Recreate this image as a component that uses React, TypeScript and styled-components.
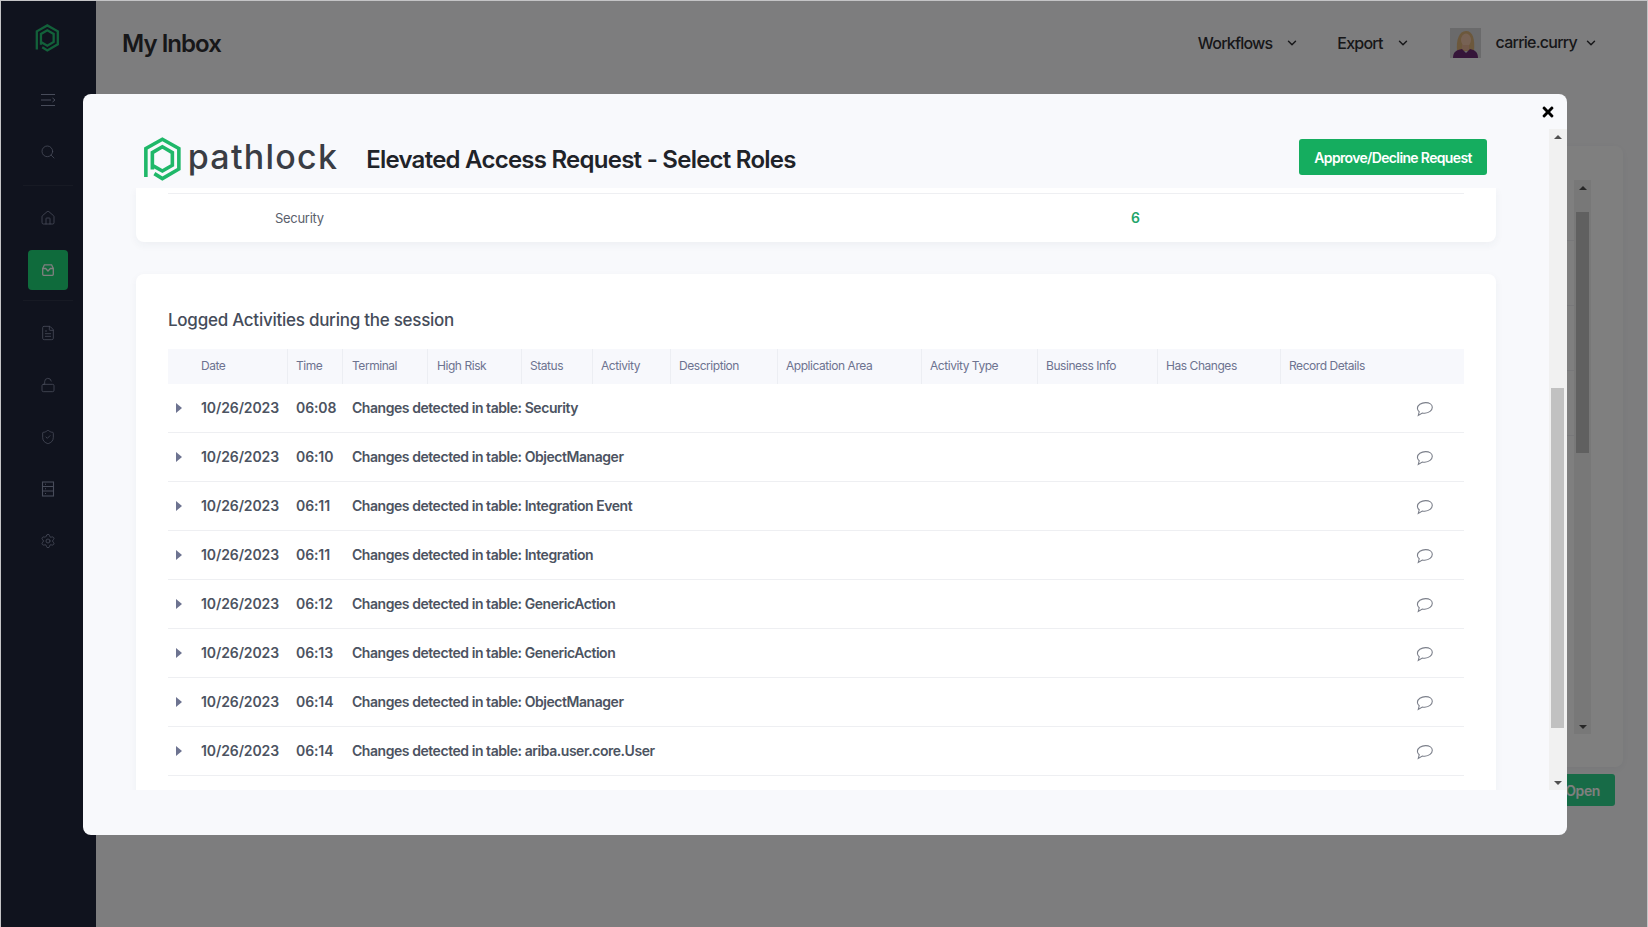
import React from 'react';
import styled, { createGlobalStyle } from 'styled-components';
import { ChevronDown, FileText, Home, LockOpen, Search, Settings, ShieldCheck } from 'lucide-react';
import { FaTimes } from 'react-icons/fa';

const GlobalStyle = createGlobalStyle`
    html, body {
        margin: 0;
        padding: 0;
        background: #c4c4c6;
    }
    * {
        box-sizing: border-box;
    }
    body {
        font-family: Inter, "Liberation Sans", sans-serif;
    }
`;

const Shell = styled.div`
    position: relative;
    display: flex;
    width: 1648px;
    height: 926px;
    margin-top: 1px;
    padding: 0 1px;
    overflow: hidden;
    background: #c4c4c6;
`;

const Sidebar = styled.aside`
    display: flex;
    flex-direction: column;
    align-items: center;
    flex: 0 0 95px;
    padding: 23px 2px 0 0;
    background: #20263c;
    color: #9098b4;
`;

const SideLogo = styled.div`
    height: 28px;
    margin-bottom: 28px;
`;

const NavItem = styled.div<{ $active?: boolean }>`
    display: flex;
    align-items: center;
    justify-content: center;
    width: 40px;
    height: 40px;
    margin-bottom: ${({ $active }) => ($active ? '9px' : '12px')};
    border-radius: 4px;
    background: ${({ $active }) => ($active ? '#1fd678' : 'transparent')};
    color: ${({ $active }) => ($active ? '#fff' : 'inherit')};
`;

const NavDivider = styled.div`
    width: 50px;
    height: 1px;
    margin: 1px 0 12px;
    background: #2e3448;
`;

const Main = styled.main`
    display: flex;
    flex-direction: column;
    flex: 1;
    min-width: 0;
    background: #fbfbfd;
`;

const TopBar = styled.header`
    display: flex;
    align-items: center;
    height: 84px;
    padding: 0 49px 0 26px;
    color: #2e2e32;
`;

const PageTitle = styled.h1`
    flex: 1;
    margin: 0;
    font-size: 24px;
    font-weight: 600;
    letter-spacing: -0.95px;
`;

const TopMenu = styled.div`
    display: flex;
    align-items: center;
    gap: 13px;
    margin-right: 38px;
    font-size: 16px;
    font-weight: 500;
    letter-spacing: -0.8px;
`;

const UserMenu = styled.div`
    display: flex;
    align-items: center;
    gap: 7px;
    margin-left: 2px;
    font-size: 16px;
    font-weight: 500;
    letter-spacing: -0.75px;
`;

const UserName = styled.span`
    margin-left: 8px;
    margin-top: -2px;
`;

const Content = styled.div`
    display: flex;
    flex-direction: column;
    flex: 1;
    padding: 61px 24px 0;
`;

const BackCard = styled.section`
    display: flex;
    justify-content: flex-end;
    gap: 32px;
    height: 621px;
    padding: 34px 32px 33px;
    border-radius: 8px;
    background: #fff;
    box-shadow: 0 2px 8px rgba(40, 50, 80, 0.06);
`;

const BackRows = styled.div`
    flex: 1;
`;

const BackRow = styled.div<{ $first?: boolean }>`
    height: ${({ $first }) => ($first ? '61px' : '65px')};
    border-bottom: 1px solid #f1f1f4;
    margin-right: -32px;
`;

const BackTrack = styled.div`
    position: relative;
    flex: 0 0 17px;
    background: #f1f1f1;
`;

const BackThumb = styled.div`
    position: absolute;
    top: 32px;
    left: 2px;
    width: 13px;
    height: 241px;
    background: #c1c1c1;
`;

const BackFooter = styled.div`
    display: flex;
    justify-content: flex-end;
    padding: 7px 8px 0 0;
`;

const OpenButton = styled.button`
    width: 100px;
    height: 32px;
    padding: 0 15px 0 0;
    border: 0;
    border-radius: 3px;
    background: #2fd68e;
    color: #fff;
    font: 600 14px Inter, sans-serif;
    letter-spacing: -0.4px;
    text-align: right;
`;

const Arrow = styled.span<{ $down?: boolean }>`
    position: absolute;
    left: 50%;
    ${({ $down }) => ($down ? 'bottom: 5px;' : 'top: 6px;')}
    margin-left: -4px;
    border-left: 4px solid transparent;
    border-right: 4px solid transparent;
    ${({ $down }) => ($down ? 'border-top' : 'border-bottom')}: 4px solid #505050;
`;

const Backdrop = styled.div`
    position: absolute;
    inset: 0 1px;
    display: flex;
    align-items: flex-start;
    padding: 93px 0 0 82px;
    background: rgba(0, 0, 0, 0.5);
`;

const Modal = styled.div`
    position: relative;
    display: flex;
    width: 1484px;
    height: 741px;
    border-radius: 8px;
    background: #f8f9fc;
`;

const CloseButton = styled.button`
    position: absolute;
    top: 10px;
    right: 11px;
    display: flex;
    padding: 0;
    border: 0;
    background: none;
    color: #000;
`;

const ModalMain = styled.div`
    display: flex;
    flex-direction: column;
    flex: 1;
    min-width: 0;
    height: 696px;
`;

const ModalHeader = styled.div`
    display: flex;
    align-items: center;
    flex: 0 0 94px;
    padding: 43px 62px 7px 60px;
`;

const Brand = styled.div`
    display: flex;
    align-items: center;
    gap: 6px;
`;

const BrandName = styled.span`
    font-size: 34px;
    font-weight: 500;
    letter-spacing: 1.25px;
    line-height: 44px;
    color: #3a3d44;
    margin-top: -4px;
`;

const ModalTitle = styled.h2`
    flex: 1;
    margin: 1px 0 0 28px;
    font-size: 24px;
    font-weight: 600;
    letter-spacing: -0.75px;
    color: #1f2329;
`;

const ApproveButton = styled.button`
    width: 188px;
    height: 36px;
    margin-top: -4px;
    padding: 0;
    border: 0;
    border-radius: 3px;
    background: #15ad5f;
    color: #fff;
    font: 600 14px Inter, sans-serif;
    letter-spacing: -0.65px;
`;

const ScrollArea = styled.div`
    flex: 1;
    min-height: 0;
    padding: 0 53px;
    overflow: hidden;
`;

const SummaryCard = styled.section`
    height: 54px;
    padding: 5px 32px 0;
    border-radius: 0 0 8px 8px;
    background: #fff;
    box-shadow: 0 3px 8px rgba(40, 50, 80, 0.05);
`;

const SummaryRow = styled.div`
    display: flex;
    align-items: center;
    height: 48px;
    padding-left: 107px;
    border-top: 1px solid #eeeff2;
    font-size: 13px;
    letter-spacing: -0.3px;
    color: #5a606c;
`;

const SummaryLabel = styled.span`
    width: 856px;
`;

const SummaryValue = styled.span`
    font-size: 14px;
    font-weight: 600;
    color: #22a56a;
`;

const ActivityCard = styled.section`
    margin-top: 32px;
    padding: 32px 32px 60px;
    border-radius: 8px;
    background: #fff;
    box-shadow: 0 3px 8px rgba(40, 50, 80, 0.05);
`;

const ActivityTitle = styled.h3`
    margin: 0 0 15px;
    font-size: 17px;
    line-height: 28px;
    font-weight: 500;
    letter-spacing: -0.26px;
    color: #454c5a;
`;

const TableHead = styled.div`
    display: flex;
    height: 35px;
    background: #f7f8fc;
`;

const HeadCell = styled.div<{ $width?: number; $inset?: number }>`
    flex: ${({ $width }) => ($width ? `0 0 ${$width}px` : '1')};
    padding-left: ${({ $inset }) => $inset ?? 8}px;
    border-right: ${({ $width }) => ($width ? '1px solid #eceef3' : '0')};
    font-size: 12px;
    letter-spacing: -0.45px;
    line-height: 34px;
    color: #6d7390;
    white-space: nowrap;
`;

const Row = styled.div`
    display: flex;
    align-items: center;
    height: 49px;
    padding-bottom: 1px;
    border-bottom: 1px solid #eeeff2;
    font-size: 14px;
    font-weight: 600;
    letter-spacing: -0.1px;
    color: #4c5361;
`;

const Caret = styled.div`
    flex: 0 0 33px;
    padding-left: 8px;
    &::before {
        content: '';
        display: block;
        width: 0;
        height: 0;
        border-top: 5px solid transparent;
        border-bottom: 5px solid transparent;
        border-left: 6px solid #6d7390;
    }
`;

const DateCell = styled.div`
    flex: 0 0 95px;
`;

const TimeCell = styled.div`
    flex: 0 0 56px;
`;

const DetailCell = styled.div`
    flex: 1;
    letter-spacing: -0.45px;
`;

const CommentSlot = styled.div`
    display: flex;
    flex: 0 0 48px;
    padding-top: 3px;
    color: #7b7f8a;
`;

const ScrollTrack = styled.div`
    position: relative;
    flex: 0 0 18px;
    margin: 35px 0 45px;
    background: #f1f1f1;
`;

const ScrollThumb = styled.div`
    position: absolute;
    top: 259px;
    left: 2px;
    width: 13px;
    height: 340px;
    background: #c1c1c1;
`;

const PathlockMark = ({ size, color }: { size: number; color: string }) => (
    <svg width={size * 0.88} height={size} viewBox="0 0 38 44" fill="none" stroke={color} strokeWidth="3.6">
        <path d="M2.5 40V11.5L19 2.2 35.5 11.5V32L19 41.6 11 36.6" />
        <path d="M9 32.5V15.6L19 9.8 29 15.6V28.2L19 34 9 28.4" />
    </svg>
);

const MenuIcon = () => (
    <svg width="18" height="16" viewBox="0 0 18 16" fill="none" stroke="currentColor" strokeWidth="1">
        <path d="M2 2.5h14M2 8h10M2 13.5h14M13.5 6l2.5 2-2.5 2" />
    </svg>
);

const TrayIcon = () => (
    <svg width="16" height="16" viewBox="0 0 16 16" fill="none" stroke="currentColor" strokeWidth="1.3">
        <path d="M2.7 6.5 4.4 2.8h7.2l1.7 3.7v5.8a1 1 0 0 1-1 1H3.7a1 1 0 0 1-1-1z" />
        <path d="M2.7 6.5h2.9L8 9l2.4-2.5h2.9" />
    </svg>
);

const ListIcon = () => (
    <svg width="16" height="18" viewBox="0 0 16 18" fill="none" stroke="currentColor" strokeWidth="1.1">
        <rect x="2.5" y="2" width="11" height="14" />
        <path d="M2.5 6.5h11M2.5 11h11M5 4.2h1M5 8.7h1M5 13.5h1" />
    </svg>
);

const CommentIcon = () => (
    <svg width="18" height="17" viewBox="0 0 18 17" fill="none" stroke="currentColor" strokeWidth="1.1">
        <path d="M9.6 1.6C5.2 1.6 1.4 4 1.4 7.3c0 1.4.7 2.6 1.8 3.5l-.9 3.6 4-2.4c.8.2 1.6.2 2.4.2 4.2-.2 7.6-2.6 7.6-5.9 0-2.9-2.9-4.7-6.7-4.7z" />
    </svg>
);

const Avatar = () => (
    <svg width="31" height="30" viewBox="0 0 31 30">
        <rect width="31" height="30" fill="#d4d4d6" />
        <path d="M7 23C6 12 9 3 16 3s9 8 8 20z" fill="#d8b078" />
        <ellipse cx="16" cy="12" rx="5" ry="6.5" fill="#efc4a8" />
        <path d="M12 17h7v5h-7z" fill="#e4b294" />
        <path d="M3 30c0-6 3-8 9-9l4 4 4-4c5 1 8 3 8 9z" fill="#6b2a72" />
    </svg>
);

const sideIcons = { size: 16, strokeWidth: 1.2 };

const columns: { label: string; width?: number; inset?: number }[] = [
    { label: 'Date', width: 120, inset: 33 },
    { label: 'Time', width: 55 },
    { label: 'Terminal', width: 85, inset: 9 },
    { label: 'High Risk', width: 94, inset: 9 },
    { label: 'Status', width: 71 },
    { label: 'Activity', width: 78 },
    { label: 'Description', width: 107 },
    { label: 'Application Area', width: 144 },
    { label: 'Activity Type', width: 116 },
    { label: 'Business Info', width: 120 },
    { label: 'Has Changes', width: 123 },
    { label: 'Record Details' },
];

const activities = [
    { time: '06:08', table: 'Security' },
    { time: '06:10', table: 'ObjectManager' },
    { time: '06:11', table: 'Integration Event' },
    { time: '06:11', table: 'Integration' },
    { time: '06:12', table: 'GenericAction' },
    { time: '06:13', table: 'GenericAction' },
    { time: '06:14', table: 'ObjectManager' },
    { time: '06:14', table: 'ariba.user.core.User' },
];

export default function App() {
    return (
        <Shell>
            <GlobalStyle />

            <Sidebar>
                <SideLogo>
                    <PathlockMark size={28} color="#25c274" />
                </SideLogo>
                <NavItem><MenuIcon /></NavItem>
                <NavItem><Search {...sideIcons} /></NavItem>
                <NavDivider />
                <NavItem><Home {...sideIcons} /></NavItem>
                <NavItem $active><TrayIcon /></NavItem>
                <NavDivider />
                <NavItem><FileText {...sideIcons} /></NavItem>
                <NavItem><LockOpen {...sideIcons} /></NavItem>
                <NavItem><ShieldCheck {...sideIcons} /></NavItem>
                <NavItem><ListIcon /></NavItem>
                <NavItem><Settings {...sideIcons} /></NavItem>
            </Sidebar>

            <Main>
                <TopBar>
                    <PageTitle>My Inbox</PageTitle>
                    <TopMenu>
                        Workflows <ChevronDown size={14} strokeWidth={2.5} />
                    </TopMenu>
                    <TopMenu>
                        Export <ChevronDown size={14} strokeWidth={2.5} />
                    </TopMenu>
                    <UserMenu>
                        <Avatar />
                        <UserName>carrie.curry</UserName>
                        <ChevronDown size={14} strokeWidth={2.5} />
                    </UserMenu>
                </TopBar>
                <Content>
                    <BackCard>
                        <BackRows>
                            <BackRow $first />
                            <BackRow />
                            <BackRow />
                            <BackRow />
                        </BackRows>
                        <BackTrack>
                            <Arrow />
                            <BackThumb />
                            <Arrow $down />
                        </BackTrack>
                    </BackCard>
                    <BackFooter>
                        <OpenButton>Open</OpenButton>
                    </BackFooter>
                </Content>
            </Main>

            <Backdrop>
                <Modal>
                    <CloseButton aria-label="Close">
                        <FaTimes size={16} />
                    </CloseButton>

                    <ModalMain>
                        <ModalHeader>
                            <Brand>
                                <PathlockMark size={44} color="#1fb869" />
                                <BrandName>pathlock</BrandName>
                            </Brand>
                            <ModalTitle>Elevated Access Request - Select Roles</ModalTitle>
                            <ApproveButton>Approve/Decline Request</ApproveButton>
                        </ModalHeader>

                        <ScrollArea>
                            <SummaryCard>
                                <SummaryRow>
                                    <SummaryLabel>Security</SummaryLabel>
                                    <SummaryValue>6</SummaryValue>
                                </SummaryRow>
                            </SummaryCard>

                            <ActivityCard>
                                <ActivityTitle>Logged Activities during the session</ActivityTitle>
                                <TableHead>
                                    {columns.map(col => (
                                        <HeadCell key={col.label} $width={col.width} $inset={col.inset}>
                                            {col.label}
                                        </HeadCell>
                                    ))}
                                </TableHead>
                                {activities.map((item, index) => (
                                    <Row key={index}>
                                        <Caret />
                                        <DateCell>10/26/2023</DateCell>
                                        <TimeCell>{item.time}</TimeCell>
                                        <DetailCell>Changes detected in table: {item.table}</DetailCell>
                                        <CommentSlot>
                                            <CommentIcon />
                                        </CommentSlot>
                                    </Row>
                                ))}
                            </ActivityCard>
                        </ScrollArea>
                    </ModalMain>

                    <ScrollTrack>
                        <Arrow />
                        <ScrollThumb />
                        <Arrow $down />
                    </ScrollTrack>
                </Modal>
            </Backdrop>
        </Shell>
    );
}
